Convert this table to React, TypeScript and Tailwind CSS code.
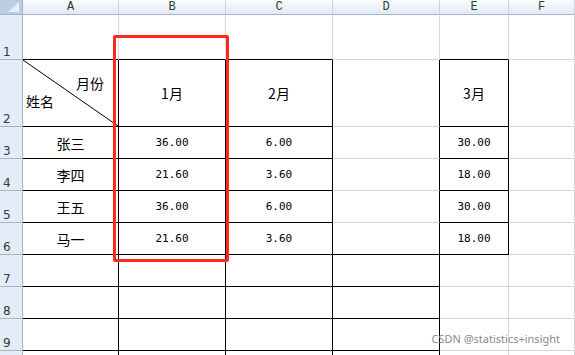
import React from 'react';

const cols = ['A', 'B', 'C', 'D', 'E', 'F'];
const rows = [1, 2, 3, 4, 5, 6, 7, 8, 9, 10];

const data: Record<string, string> = {
  B2: '1月',
  C2: '2月',
  E2: '3月',
  A3: '张三',
  A4: '李四',
  A5: '王五',
  A6: '马一',
  B3: '36.00',
  B4: '21.60',
  B5: '36.00',
  B6: '21.60',
  C3: '6.00',
  C4: '3.60',
  C5: '6.00',
  C6: '3.60',
  E3: '30.00',
  E4: '18.00',
  E5: '30.00',
  E6: '18.00',
};

// which cells carry a black right / bottom edge
const blackRight = (c: number, r: number) => {
  if (c <= 3) return r >= 2;
  if (c === 4) return r >= 2 && r <= 6;
  return false;
};

const blackBottom = (c: number, r: number) => {
  if (c <= 2) return r >= 1;
  if (c === 3) return r >= 6;
  if (c === 4) return r >= 1 && r <= 6;
  return false;
};

const Cell = ({ c, r }: { c: number; r: number }) => {
  const key = `${cols[c]}${r}`;
  const text = data[key];
  const isNum = text && /^[0-9.]+$/.test(text);

  return (
    <div
      className={`relative flex items-center justify-center border-r border-b text-black ${
        blackRight(c, r) ? 'border-r-black' : 'border-r-[#d0d7e5]'
      } ${blackBottom(c, r) ? 'border-b-black' : 'border-b-[#d0d7e5]'}`}
    >
      {key === 'A2' ? (
        <>
          <svg className="absolute inset-0 w-full h-full" preserveAspectRatio="none" viewBox="0 0 100 100">
            <line x1="0" y1="0" x2="100" y2="100" stroke="#000" strokeWidth="1" vectorEffect="non-scaling-stroke" />
          </svg>
          <div className="flex flex-col w-full h-full pt-[16px] pl-[3px] pr-[14px] gap-[4px] text-[14px] leading-none font-['Noto_Sans_CJK_SC',sans-serif]">
            <span className="self-end">月份</span>
            <span className="self-start">姓名</span>
          </div>
        </>
      ) : text ? (
        <span
          className={
            isNum
              ? "text-[11px] leading-none font-['DejaVu_Sans_Mono',monospace]"
              : "text-[14px] leading-none font-['Noto_Sans_CJK_SC',sans-serif]"
          }
        >
          {text}
        </span>
      ) : null}
    </div>
  );
};

export default function App() {
  return (
    <div className="relative w-[575px] h-[355px] overflow-hidden bg-white">
      <div className="grid grid-cols-[23px_96px_107px_107px_107px_69px_66px] grid-rows-[15px_45px_67px_repeat(8,32px)]">
        {/* corner */}
        <div className="flex items-end justify-end pr-[3px] pb-[2px] bg-[#b9cde6] border-r border-b border-[#9eb6ce]">
          <svg width="11" height="10" viewBox="0 0 11 10">
            <polygon points="11,0 11,10 0,10" fill="#e6eef8" />
          </svg>
        </div>
        {cols.map((col) => (
          <div
            key={col}
            className="flex items-center justify-center bg-gradient-to-b from-[#fafcfe] to-[#e2e9f3] border-r border-r-[#c5d3e3] border-b border-b-[#9eb6ce] text-[12px] leading-none text-[#27413e] font-['Liberation_Mono',monospace]"
          >
            {col}
          </div>
        ))}

        {rows.map((r) => (
          <React.Fragment key={r}>
            <div className="flex items-end pl-[3px] pb-[1px] bg-[#e4ecf7] border-r border-r-[#9eb6ce] border-b border-b-[#9eb6ce] text-[12px] leading-none text-[#27413e] font-['DejaVu_Sans',sans-serif]">
              {r < 10 ? r : null}
            </div>
            {cols.map((_, c) => (
              <Cell key={c} c={c} r={r} />
            ))}
          </React.Fragment>
        ))}
      </div>

      {/* highlight box */}
      <div className="absolute left-[113px] top-[35px] w-[116px] h-[227px] border-[3px] border-[#ff2a1c] rounded-[2px] pointer-events-none" />

      <div className="absolute right-[15px] bottom-[8px] text-[11px] text-[#8a8a8a] font-['Noto_Sans',sans-serif]">
        CSDN @statistics+insight
      </div>
    </div>
  );
}
